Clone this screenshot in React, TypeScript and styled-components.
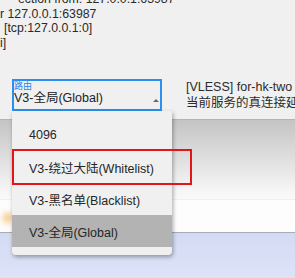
import styled, { createGlobalStyle } from 'styled-components';

const GlobalStyle = createGlobalStyle`
  html, body {
    margin: 0;
    padding: 0;
    background: #f0f0f0;
  }
  body {
    font-family: "Liberation Sans", "Noto Sans CJK SC", sans-serif;
    -webkit-font-smoothing: antialiased;
  }
`;

const Screen = styled.div`
  position: relative;
  width: 295px;
  height: 278px;
  overflow: hidden;
  display: flex;
  flex-direction: column;
  color: #2b2b2b;
`;

const TopPanel = styled.div`
  height: 119px;
  flex-shrink: 0;
  background: #f0f0f0;
  display: flex;
  flex-direction: column;
`;

const LogBlock = styled.div`
  margin-top: -8px;
  font-size: 12.3px;
  line-height: 14.5px;
  color: #2a2a2a;
`;

const LogLine = styled.div<{ $indent: number }>`
  padding-left: ${(p) => p.$indent}px;
  white-space: nowrap;
`;

const SelectRow = styled.div`
  margin-top: 29px;
  display: flex;
  align-items: flex-start;
`;

const SelectWrap = styled.div`
  position: relative;
  margin-left: 12px;
  width: 150px;
  flex-shrink: 0;
`;

const SelectBox = styled.div`
  box-sizing: border-box;
  height: 32px;
  border: 2px solid #2a8ff0;
  display: flex;
  flex-direction: column;
  padding: 1px 0 0 0;
`;

const FieldLabel = styled.span`
  font-size: 9px;
  line-height: 9px;
  color: #1f86ee;
  height: 8px;
`;

const ValueRow = styled.div`
  display: flex;
  align-items: center;
  justify-content: space-between;
  font-size: 12.5px;
  line-height: 17px;
  color: #222;
`;

const Caret = styled.span`
  width: 0;
  height: 0;
  margin: 3px 1px 0 0;
  border-left: 3px solid transparent;
  border-right: 3px solid transparent;
  border-bottom: 3px solid #6a6a6a;
`;

const ServerInfo = styled.div`
  margin-left: 24px;
  font-size: 12.5px;
  line-height: 16px;
  color: #2b2b2b;
  white-space: nowrap;
`;

const Menu = styled.ul`
  position: absolute;
  top: 100%;
  left: 0;
  width: 160px;
  margin: 0;
  padding: 8px 0;
  list-style: none;
  background: #f0f0f0;
  border-radius: 0 0 4px 4px;
  box-shadow: 1px 2px 4px rgba(0, 0, 0, 0.35);
  z-index: 2;
`;

const MenuItem = styled.li<{ $selected?: boolean }>`
  height: 32px;
  display: flex;
  align-items: center;
  padding-left: 17px;
  font-size: 12.5px;
  color: #262626;
  background: ${(p) => (p.$selected ? '#b3b3b3' : 'transparent')};
`;

const Highlight = styled.div`
  position: absolute;
  top: 38px;
  left: 0;
  width: 180px;
  height: 36px;
  box-sizing: border-box;
  border: 2px solid #e3141b;
  pointer-events: none;
`;

const ShadeBand = styled.div`
  height: 79px;
  flex-shrink: 0;
  border-top: 1px solid #b4b4b4;
  background: linear-gradient(#c4c4c4, #dadada 40%, #f6f6f6 90%, #fafafa);
`;

const WhiteBand = styled.div`
  height: 33px;
  flex-shrink: 0;
  background: #fdfdfd;
  border-top: 1px solid #f3efe4;
  padding: 13px 0 0 3px;
  box-sizing: border-box;
`;

const Glow = styled.div`
  width: 10px;
  height: 10px;
  border-radius: 50%;
  background: #f6c27a;
  filter: blur(3px);
`;

const DesktopBand = styled.div`
  flex: 1;
  border-top: 1px solid #a9acb8;
  background: linear-gradient(#d3dbf3, #dde3f7);
`;

const logLines = [
  { text: 'ection from: 127.0.0.1:63987', indent: 18 },
  { text: 'r 127.0.0.1:63987', indent: 0 },
  { text: '[tcp:127.0.0.1:0]', indent: 4 },
  { text: 'i]', indent: 0 },
];

const routes = ['4096', 'V3-绕过大陆(Whitelist)', 'V3-黑名单(Blacklist)', 'V3-全局(Global)'];

export default function App() {
  const current = 'V3-全局(Global)';

  return (
    <>
      <GlobalStyle />
      <Screen>
        <TopPanel>
          <LogBlock>
            {logLines.map((l, i) => (
              <LogLine key={i} $indent={l.indent}>
                {l.text}
              </LogLine>
            ))}
          </LogBlock>

          <SelectRow>
            <SelectWrap>
              <SelectBox>
                <FieldLabel>路由</FieldLabel>
                <ValueRow>
                  <span>{current}</span>
                  <Caret />
                </ValueRow>
              </SelectBox>

              <Menu>
                {routes.map((r) => (
                  <MenuItem key={r} $selected={r === current}>
                    {r}
                  </MenuItem>
                ))}
                <Highlight />
              </Menu>
            </SelectWrap>

            <ServerInfo>
              <div>[VLESS] for-hk-two</div>
              <div>当前服务的真连接延迟</div>
            </ServerInfo>
          </SelectRow>
        </TopPanel>

        <ShadeBand />
        <WhiteBand>
          <Glow />
        </WhiteBand>
        <DesktopBand />
      </Screen>
    </>
  );
}
